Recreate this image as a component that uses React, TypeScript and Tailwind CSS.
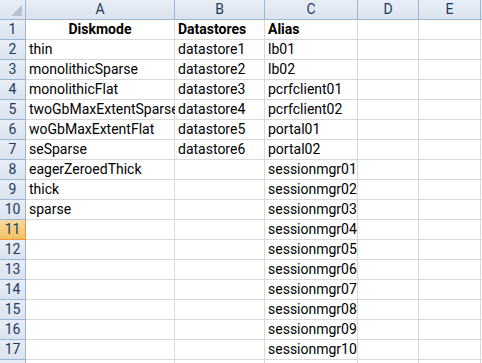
const cols = ["A", "B", "C", "D", "E"];

const data: [string, string, string][] = [
  ["thin", "datastore1", "lb01"],
  ["monolithicSparse", "datastore2", "lb02"],
  ["monolithicFlat", "datastore3", "pcrfclient01"],
  ["twoGbMaxExtentSparse", "datastore4", "pcrfclient02"],
  ["woGbMaxExtentFlat", "datastore5", "portal01"],
  ["seSparse", "datastore6", "portal02"],
  ["eagerZeroedThick", "", "sessionmgr01"],
  ["thick", "", "sessionmgr02"],
  ["sparse", "", "sessionmgr03"],
  ["", "", "sessionmgr04"],
  ["", "", "sessionmgr05"],
  ["", "", "sessionmgr06"],
  ["", "", "sessionmgr07"],
  ["", "", "sessionmgr08"],
  ["", "", "sessionmgr09"],
  ["", "", "sessionmgr10"],
];

const cell = "h-5 border-r border-b border-[#d9d9d9] bg-white px-[3px] leading-[19px] whitespace-nowrap";
const head = "h-5 border-r border-b border-[#9eb6ce] bg-gradient-to-b from-[#e8eef7] to-[#dae3ef] text-[#1f3b5c] text-center leading-[19px]";

export default function App() {
  return (
    <div className="w-[482px] h-[363px] overflow-hidden bg-white text-[14px] text-black" style={{ fontFamily: "Roboto, 'Open Sans', sans-serif" }}>
      <div className="grid grid-cols-[26px_149px_90px_93px_61px_62px_1fr]">
        {/* corner */}
        <div className="relative h-5 border-r border-b border-[#9eb6ce] bg-gradient-to-b from-[#e8eef7] to-[#dae3ef]">
          <div className="absolute right-[3px] bottom-[3px] w-0 h-0 border-l-[11px] border-l-transparent border-b-[11px] border-b-[#b6c2d0]" />
        </div>
        {cols.map((c) => (
          <div key={c} className={head}>{c}</div>
        ))}
        <div className={head} />

        {/* row 1 */}
        <div className={head}>1</div>
        <div className={`${cell} text-center font-bold`}>Diskmode</div>
        <div className={`${cell} font-bold`}>Datastores</div>
        <div className={`${cell} font-bold`}>Alias</div>
        <div className={cell} />
        <div className={cell} />
        <div className={cell} />

        {data.map((r, i) => {
          const n = i + 2;
          const active = n === 11;
          return (
            <div key={n} className="contents">
              <div
                className={
                  active
                    ? "h-5 border-r border-b border-[#f29436] bg-gradient-to-b from-[#f9d99f] to-[#f1c15f] text-[#1f3b5c] text-center leading-[19px]"
                    : head
                }
              >
                {n}
              </div>
              <div className={cell}>{r[0]}</div>
              <div className={cell}>{r[1]}</div>
              <div className={cell}>{r[2]}</div>
              <div className={cell} />
              <div className={cell} />
              <div className={cell} />
            </div>
          );
        })}
        <div className={head} />
        <div className={cell} />
        <div className={cell} />
        <div className={cell} />
        <div className={cell} />
        <div className={cell} />
        <div className={cell} />
      </div>
    </div>
  );
}
